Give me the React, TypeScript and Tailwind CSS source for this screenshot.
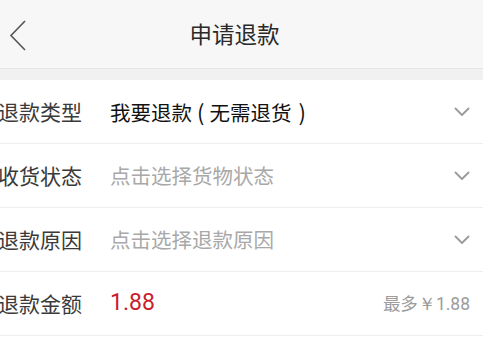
import React from "react";

function ChevronDown() {
  return (
    <svg width="16" height="10" viewBox="0 0 16 10" fill="none" className="shrink-0">
      <path d="M1.5 1.5L8 8l6.5-6.5" stroke="#9a9a9a" strokeWidth="1.8" strokeLinecap="round" strokeLinejoin="round" />
    </svg>
  );
}

const rows = [
  {
    label: "退款类型",
    value: (
      <>
        我要退款<span className="ml-[5px] mr-[5px] text-[22px]">(</span>无需退货<span className="ml-[7px] text-[22px]">)</span>
      </>
    ),
    kind: "value",
  },
  { label: "收货状态", value: "点击选择货物状态", kind: "placeholder" },
  { label: "退款原因", value: "点击选择退款原因", kind: "placeholder" },
];

export default function App() {
  return (
    <div
      className="w-[483px] h-[354px] overflow-hidden bg-white"
      style={{ fontFamily: '"Noto Sans CJK SC", "Noto Sans", sans-serif' }}
    >
      <header className="relative flex h-[69px] items-center justify-center bg-[#f7f7f7] border-b border-[#e6e6e6]">
        <svg width="18" height="32" viewBox="0 0 18 32" fill="none" className="absolute left-[9px] top-[20px]">
          <path d="M16 1L2 15.5 16 30" stroke="#555" strokeWidth="1.6" strokeLinejoin="miter" />
        </svg>
        <h1 className="mr-[14px] text-[22.5px] text-[#2a2a2a]">申请退款</h1>
      </header>
      <div className="h-[11px] bg-[#f1f1f1]" />
      {rows.map((r) => (
        <div key={r.label} className="flex h-[64px] items-center border-b border-[#eeeeee] pr-[13px]">
          <span className="w-[112px] -ml-[2px] text-[21px] text-[#3a3a3a]">{r.label}</span>
          <span
            className={
              r.kind === "value"
                ? "flex-1 text-[20.5px] text-[#111]"
                : "flex-1 text-[20.5px] text-[#a8a8a8]"
            }
          >
            {r.value}
          </span>
          <ChevronDown />
        </div>
      ))}
      <div className="flex h-[64px] items-center border-b border-[#eeeeee] pr-[13px]">
        <span className="w-[112px] -ml-[2px] text-[21px] text-[#3a3a3a]">退款金额</span>
        <span className="flex-1 text-[23px] text-[#c8202c]" style={{ fontFamily: "Roboto, sans-serif" }}>
          1.88
        </span>
        <span className="text-[17.5px] text-[#9c9c9c]">
          最多<span style={{ fontFamily: "Roboto, sans-serif" }}>￥1.88</span>
        </span>
      </div>
    </div>
  );
}
